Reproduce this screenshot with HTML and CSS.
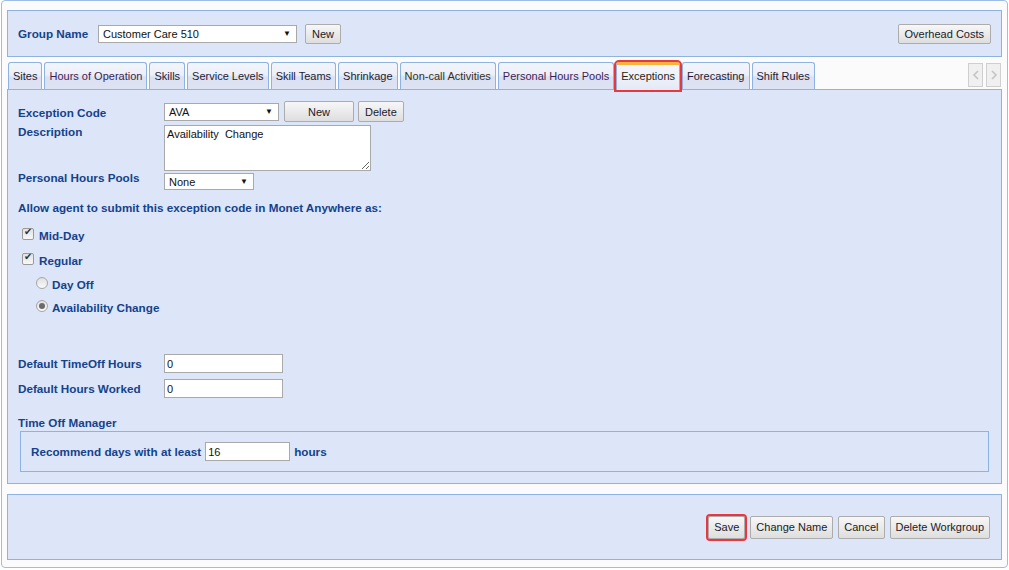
FILE: index.html
```html
<!DOCTYPE html>
<html lang="en">
<head>
    <meta charset="UTF-8">
    <title>Workgroup - Exceptions</title>
    <link rel="stylesheet" href="styles.css">
</head>
<body>

<div class="frame">
    <div class="panel top-panel">
        <span class="label">Group Name</span>
        <div class="select group-select">Customer Care 510<span class="arrow">&#9660;</span></div>
        <button class="btn">New</button>
        <span class="spacer"></span>
        <button class="btn">Overhead Costs</button>
    </div>

    <div class="tab-bar">
        <div class="tab">Sites</div>
        <div class="tab visited">Hours of Operation</div>
        <div class="tab">Skills</div>
        <div class="tab">Service Levels</div>
        <div class="tab">Skill Teams</div>
        <div class="tab">Shrinkage</div>
        <div class="tab olive">Non-call Activities</div>
        <div class="tab visited">Personal Hours Pools</div>
        <div class="tab active marked">Exceptions</div>
        <div class="tab">Forecasting</div>
        <div class="tab">Shift Rules</div>
        <span class="spacer"></span>
        <div class="scroll-btn">
            <svg width="8" height="10" viewBox="0 0 8 10"><path d="M6 1 L2 5 L6 9" fill="none" stroke="#c4c4c4" stroke-width="1.6"/></svg>
        </div>
        <div class="scroll-btn">
            <svg width="8" height="10" viewBox="0 0 8 10"><path d="M2 1 L6 5 L2 9" fill="none" stroke="#c4c4c4" stroke-width="1.6"/></svg>
        </div>
    </div>

    <div class="panel tab-panel">
        <div class="row row-code">
            <span class="label field-label">Exception Code</span>
            <div class="select code-select">AVA<span class="arrow">&#9660;</span></div>
            <button class="btn btn-new">New</button>
            <button class="btn">Delete</button>
        </div>
        <div class="row row-desc">
            <span class="label field-label">Description</span>
            <textarea class="desc">Availability  Change</textarea>
        </div>
        <div class="row row-pools">
            <span class="label field-label">Personal Hours Pools</span>
            <div class="select pools-select">None<span class="arrow">&#9660;</span></div>
        </div>

        <div class="label allow">Allow agent to submit this exception code in Monet Anywhere as:</div>

        <div class="check-row first">
            <span class="checkbox checked"></span><span class="label">Mid-Day</span>
        </div>
        <div class="check-row">
            <span class="checkbox checked"></span><span class="label">Regular</span>
        </div>
        <div class="check-row radio-row">
            <span class="radio"></span><span class="label">Day Off</span>
        </div>
        <div class="check-row radio-row">
            <span class="radio on"></span><span class="label">Availability Change</span>
        </div>

        <div class="row row-timeoff">
            <span class="label field-label">Default TimeOff Hours</span>
            <input class="text-input" type="text" value="0">
        </div>
        <div class="row row-worked">
            <span class="label field-label">Default Hours Worked</span>
            <input class="text-input" type="text" value="0">
        </div>

        <div class="label section-title">Time Off Manager</div>
        <div class="fieldset">
            <span class="label">Recommend days with at least</span>
            <input class="text-input hours-input" type="text" value="16">
            <span class="label">hours</span>
        </div>
    </div>

    <div class="panel bottom-panel">
        <button class="btn marked">Save</button>
        <button class="btn">Change Name</button>
        <button class="btn">Cancel</button>
        <button class="btn">Delete Workgroup</button>
    </div>
</div>

</body>
</html>
```

FILE: styles.css
```css
body {
    margin: 0;
    background: #fff;
    font-family: 'Liberation Sans', Arial, sans-serif;
    font-size: 11px;
    color: #222;
}

.frame {
    margin-left: 1px;
    width: 995px;
    height: 557px;
    padding: 9px 5px 0 5px;
    border: 1px solid #9dbde6;
    border-radius: 4px;
    background: #fbfbfb;
}

.panel {
    background-color: #dce6f8;
    border: 1px solid #8db3e2;
}

.label {
    font-weight: bold;
    color: #15428b;
    font-size: 11.7px;
}

.spacer {
    flex: 1;
}

/* top panel */
.top-panel {
    display: flex;
    align-items: center;
    height: 45px;
    padding: 0 10px;
}

.top-panel .label {
    width: 80px;
}

.group-select {
    width: 199px;
    margin-right: 8px;
}

/* selects, buttons, inputs */
.select {
    position: relative;
    box-sizing: border-box;
    height: 18px;
    line-height: 16px;
    padding-left: 4px;
    background: #fff;
    border: 1px solid #a9a9a9;
    color: #111;
}

.select .arrow {
    position: absolute;
    right: 5px;
    top: 0;
    font-size: 8px;
    color: #111;
}

.btn {
    box-sizing: border-box;
    height: 20px;
    padding: 0 6px;
    border: 1px solid #acacac;
    border-radius: 2px;
    background: linear-gradient(to bottom, #f7f7f7, #dedede);
    font-family: 'Liberation Sans', Arial, sans-serif;
    font-size: 11px;
    color: #1a1a2a;
}

.marked {
    outline: 2px solid #e8383e;
    outline-offset: 0;
}

.text-input {
    box-sizing: border-box;
    width: 119px;
    height: 19px;
    padding: 0 2px;
    border: 1px solid #a9a9a9;
    font-family: 'Liberation Sans', Arial, sans-serif;
    font-size: 11px;
    color: #111;
}

/* tabs */
.tab-bar {
    display: flex;
    align-items: flex-end;
    height: 27px;
    margin-top: 5px;
    padding-left: 1px;
    gap: 2px;
}

.tab {
    box-sizing: border-box;
    height: 27px;
    line-height: 26px;
    padding: 0 4px;
    border: 1px solid #8db3e2;
    border-bottom: none;
    border-radius: 3px 3px 0 0;
    background: linear-gradient(to bottom, #f3f5fb 0%, #eceff8 45%, #dbe1f2 55%, #dde3f3 100%);
    font-size: 11px;
    color: #1c1c34;
    white-space: nowrap;
}

.tab.visited {
    color: #3c1f55;
}

.tab.olive {
    color: #35301a;
}

.tab.active {
    position: relative;
    margin-bottom: -1px;
    height: 28px;
    border-top: 3px solid #f6b33d;
    line-height: 23px;
    background: linear-gradient(to bottom, #f5f6fb 0%, #eef1f9 50%, #e3e9f6 100%);
    color: #2a2414;
}

.scroll-btn {
    display: flex;
    align-items: center;
    justify-content: center;
    box-sizing: border-box;
    width: 15px;
    height: 24px;
    margin-bottom: 2px;
    margin-left: 1px;
    border: 1px solid #cfcfcf;
    background: #f0f0f0;
}

.scroll-btn:last-child {
    margin-right: 1px;
}

/* tab panel */
.tab-panel {
    height: 370px;
    padding: 11px 0 12px 10px;
}

.row {
    display: flex;
    align-items: flex-start;
}

.field-label {
    width: 146px;
    flex-shrink: 0;
}

.row-code {
    align-items: center;
    height: 21px;
}

.row-code .field-label {
    margin-top: 2px;
}

.code-select {
    width: 115px;
    margin-right: 5px;
}

.btn-new {
    width: 70px;
    height: 21px;
    margin-right: 4px;
}

.row-code .btn {
    height: 21px;
}

.row-desc {
    margin-top: 3px;
}

.desc {
    box-sizing: border-box;
    width: 207px;
    height: 46px;
    padding: 2px 2px;
    border: 1px solid #a9a9a9;
    font-family: 'Liberation Sans', Arial, sans-serif;
    font-size: 11px;
    color: #111;
    resize: both;
}

.row-pools .field-label {
    line-height: 13px;
}

.pools-select {
    width: 90px;
    height: 17px;
    line-height: 16px;
    margin-top: 2px;
}

.allow {
    margin-top: 11px;
    line-height: 14px;
}

.check-row {
    display: flex;
    align-items: center;
    height: 18px;
    margin-top: 7px;
    padding-left: 4px;
}

.check-row.first {
    margin-top: 11px;
}

.check-row.radio-row {
    margin-top: 6px;
    padding-left: 18px;
}

.check-row.radio-row + .radio-row {
    margin-top: 5px;
}

.checkbox {
    position: relative;
    box-sizing: border-box;
    width: 12px;
    height: 12px;
    margin-right: 5px;
    margin-top: -3px;
    border: 1px solid #9a9a9a;
    border-radius: 2px;
    background: linear-gradient(to bottom, #e2e2e2, #f8f8f8);
}

.checkbox.checked::after {
    content: "\2714";
    position: absolute;
    left: 1px;
    top: -3px;
    font-size: 10px;
    color: #333;
}

.radio {
    position: relative;
    box-sizing: border-box;
    width: 12px;
    height: 12px;
    margin-right: 4px;
    margin-top: -3px;
    border: 1px solid #a5a5a5;
    border-radius: 50%;
    background: linear-gradient(to bottom, #e0e0e0, #fafafa);
}

.radio.on::after {
    content: "";
    position: absolute;
    left: 2px;
    top: 2px;
    width: 6px;
    height: 6px;
    border-radius: 50%;
    background: #6a6a6a;
}

.row-timeoff {
    align-items: center;
    margin-top: 38px;
}

.row-worked {
    align-items: center;
    margin-top: 6px;
}

.section-title {
    margin-top: 18px;
    line-height: 14px;
}

.fieldset {
    display: flex;
    align-items: center;
    gap: 4px;
    height: 39px;
    margin: 1px 12px 0 2px;
    padding-left: 10px;
    border: 1px solid #8db3e2;
}

.hours-input {
    width: 85px;
}

/* bottom panel */
.bottom-panel {
    display: flex;
    justify-content: flex-end;
    align-items: center;
    gap: 5px;
    height: 64px;
    margin-top: 10px;
    padding: 0 11px;
}

.bottom-panel .btn {
    height: 23px;
    padding: 0 5px;
}
```
